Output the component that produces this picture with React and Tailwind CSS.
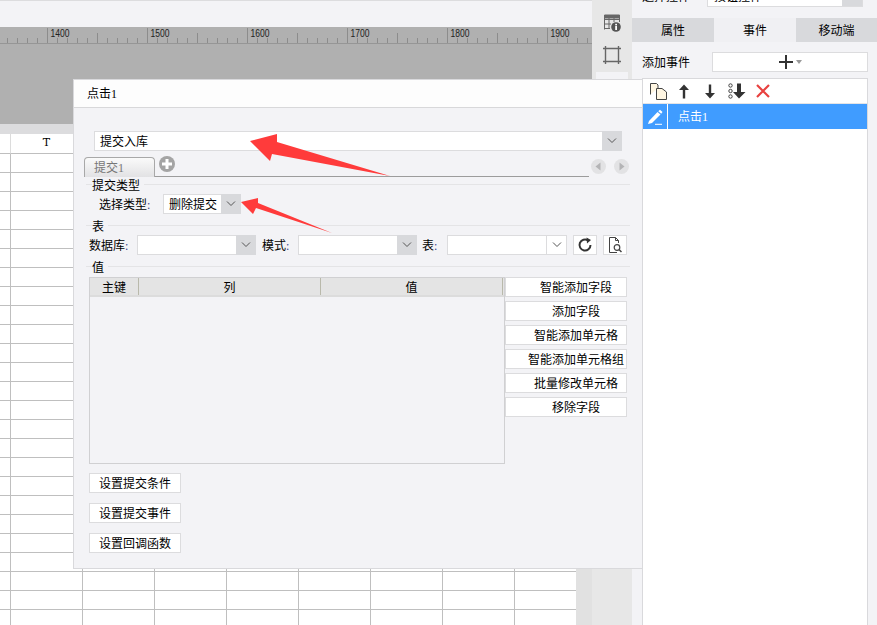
import React from "react";

const labels = [1400, 1500, 1600, 1700, 1800, 1900];
const sideButtons = ["智能添加字段", "添加字段", "智能添加单元格", "智能添加单元格组", "批量修改单元格", "移除字段"];
const bottomButtons = ["设置提交条件", "设置提交事件", "设置回调函数"];

const Chevron = () => (
  <svg width="10" height="6" viewBox="0 0 10 6" fill="none" stroke="#555" strokeWidth="1">
    <path d="M1 0.5 L5 4.5 L9 0.5" />
  </svg>
);

const Ruler = () => {
  const ticks = [];
  for (let x = 7; x < 592; x += 10) {
    const step = Math.round((x - 47) / 10);
    const top = step % 10 === 0 ? 1 : step % 5 === 0 ? 6 : 11;
    ticks.push(<line key={x} x1={x + 0.5} x2={x + 0.5} y1={top} y2="16" stroke="#8c8c8c" />);
  }
  return (
    <svg width="592" height="17" className="block">
      {ticks}
      <line x1="0" x2="592" y1="16.5" y2="16.5" stroke="#969696" />
      {labels.map((n, i) => (
        <text key={n} x={50.5 + i * 100} y="10" fontSize="10" fill="#222" fontFamily="Liberation Sans, sans-serif" textLength="19" lengthAdjust="spacingAndGlyphs">
          {n}
        </text>
      ))}
    </svg>
  );
};

const Sheet = () => {
  const cells = [];
  for (let r = 0; r < 26; r++) {
    for (let c = 0; c < 9; c++) {
      cells.push(
        <div
          key={`${r}-${c}`}
          className={`border-b border-r border-[#bfbfbf] flex items-center justify-center ${
            r === 0 ? "border-r-[#dcdcdc]" : ""
          }`}
        >
          {r === 0 && c === 1 ? "T" : ""}
        </div>
      );
    }
  }
  return (
    <div className="w-[576px] h-full overflow-hidden bg-white">
      <div className="grid grid-cols-[11px_repeat(8,72px)] grid-rows-[20px] auto-rows-[19px] w-[587px] font-['DejaVu_Serif',serif] text-[11px] text-black">
        {cells}
      </div>
    </div>
  );
};

const Combo = ({ width, text, plain }) => (
  <div className={`flex h-[20px] border border-[#dcdcde] bg-white ${width}`}>
    <div className="flex-1 pl-[5px] leading-[20px] whitespace-nowrap overflow-hidden">{text}</div>
    <div className={`w-[20px] -my-px -mr-px flex items-center justify-center ${plain ? "border-l border-[#dcdcde] my-0 mr-0" : "bg-[#d8d9dc]"}`}>
      <Chevron />
    </div>
  </div>
);

const SectionTitle = ({ title, className }) => (
  <div className={`flex items-center h-[14px] ml-[12px] w-[544px] ${className}`}>
    <div className="w-[6px] h-px bg-[#e4e4e6]" />
    <div className="pr-[4px] pt-[4px] leading-[14px] whitespace-nowrap">{title}</div>
    <div className="flex-1 h-px bg-[#e4e4e6]" />
  </div>
);

const Label = ({ text, width }) => (
  <div className={`h-[20px] whitespace-nowrap leading-[22px] ${width}`}>
    {text}
    <span className="text-[#33408a]">:</span>
  </div>
);

const IconButton = ({ children, className }) => (
  <div className={`w-[24px] h-[20px] border border-[#dcdcde] bg-white flex items-center justify-center ${className}`}>
    {children}
  </div>
);

const PlainButton = ({ children, className }) => (
  <div className={`h-[20px] border border-[#dcdcde] bg-white leading-[20px] text-center whitespace-nowrap ${className}`}>
    {children}
  </div>
);

const NavDot = ({ d, className }) => (
  <svg width="15" height="15" viewBox="0 0 15 15" className={className}>
    <circle cx="7.5" cy="7.5" r="7.5" fill="#e2e2e4" />
    <path d={d} fill="#b4b4b6" />
  </svg>
);

const Dialog = () => (
  <div className="absolute left-[73px] top-[79px] w-[570px] h-[490px] border border-[#d9d9dc] bg-[#f3f3f6] text-[12px] text-black">
    <div className="h-[28px] border-b border-[#d8d8da] bg-[#fdfdfd] pl-[13px] leading-[29px]">点击1</div>

    <div className="ml-[20px] mt-[23px]">
      <Combo width="w-[528px]" text="提交入库" />
    </div>

    <div className="flex ml-[10px] mt-[6px] h-[20px]">
      <div className="w-[71px] h-[20px] border border-b-0 border-[#a8a8a8] rounded-t-[4px] bg-gradient-to-b from-[#fafafa] to-[#e2e2e4] pl-[9px] leading-[20px] text-[#777]">
        提交1
      </div>
      <div className="w-[434px] border-b border-[#9c9c9c] pl-[4px]">
        <svg width="16" height="16" viewBox="0 0 16 16" className="-mt-px">
          <circle cx="8" cy="8" r="8" fill="#a4a4a4" />
          <path d="M3 6.5 H6.5 V3 H9.5 V6.5 H13 V9.5 H9.5 V13 H6.5 V9.5 H3 Z" fill="#fff" />
        </svg>
      </div>
      <div className="flex gap-[8px] pl-[2px] pt-[2px]">
        <NavDot d="M9.5 3.5 V11.5 L4.5 7.5 Z" />
        <NavDot d="M5.5 3.5 V11.5 L10.5 7.5 Z" />
      </div>
    </div>

    <SectionTitle title="提交类型" />
    <div className="flex ml-[25px] mt-[3px]">
      <Label text="选择类型" width="w-[64px]" />
      <Combo width="w-[78px]" text="删除提交" />
    </div>

    <SectionTitle title="表" className="mt-[4px]" />
    <div className="flex ml-[15px] mt-[3px]">
      <Label text="数据库" width="w-[48px]" />
      <Combo width="w-[119px]" />
      <Label text="模式" width="w-[36px] ml-[6px]" />
      <Combo width="w-[119px]" />
      <Label text="表" width="w-[25px] ml-[5px]" />
      <Combo width="w-[120px]" plain />
      <IconButton className="ml-[6px]">
        <svg width="16" height="16" viewBox="0 0 16 16" fill="none">
          <path d="M13.5 8 A5.5 5.5 0 1 1 11 3.4" stroke="#333" strokeWidth="2" />
          <path d="M9.5 0.5 L14 3 L10 6.5 Z" fill="#333" />
        </svg>
      </IconButton>
      <IconButton className="ml-[6px]">
        <svg width="16" height="16" viewBox="0 0 16 16" fill="none" stroke="#444">
          <path d="M10 15.5 H2.5 V0.5 H8.5 L11.5 3.5 V6" />
          <path d="M8.5 0.5 V3.5 H11.5" />
          <circle cx="10" cy="10.5" r="2.8" strokeWidth="1.2" />
          <path d="M12 12.5 L14.5 15" strokeWidth="1.5" />
        </svg>
      </IconButton>
    </div>

    <SectionTitle title="值" className="mt-[4px]" />
    <div className="flex ml-[15px] mt-[4px]">
      <div className="w-[416px] h-[187px] border border-[#d0d0d2] flex flex-col">
        <div className="flex h-[19px] bg-[#e4e4e4] border-b-2 border-[#dcdcdc] leading-[20px] text-center">
          <div className="w-[49px] border-r border-[#b9b9ab]">主键</div>
          <div className="w-[182px] border-r border-[#b9b9ab]">列</div>
          <div className="w-[182px] border-r border-[#b9b9ab]">值</div>
        </div>
      </div>
      <div className="flex flex-col gap-[4px]">
        {sideButtons.map((name) => (
          <PlainButton key={name} className="w-[122px] pl-[20px]">
            {name}
          </PlainButton>
        ))}
      </div>
    </div>

    <div className="flex flex-col gap-[10px] ml-[15px] mt-[9px]">
      {bottomButtons.map((name) => (
        <PlainButton key={name} className="w-[92px]">
          {name}
        </PlainButton>
      ))}
    </div>
  </div>
);

const ToolStrip = () => (
  <div className="w-[40px] h-full bg-[#e7e7e7] flex flex-col items-center">
    <svg width="18" height="18" viewBox="0 0 18 18" className="mt-[14px]" fill="none" stroke="#666">
      <path d="M1.5 15.5 V1.5 H16.5 V8" />
      <path d="M1.5 5.5 H16.5 M1.5 10 H8 M1.5 14.5 H7 M6 1.5 V15 M11 1.5 V8" />
      <path d="M1.5 1 H16.5 V4 H1.5 Z" fill="#666" />
      <circle cx="13" cy="13" r="4.8" fill="#555" stroke="none" />
      <rect x="12.2" y="9.8" width="1.8" height="1.6" fill="#fff" stroke="none" />
      <rect x="12.2" y="12" width="1.8" height="4" fill="#fff" stroke="none" />
    </svg>
    <svg width="18" height="18" viewBox="0 0 18 18" className="mt-[14px]" fill="none">
      <path d="M2.5 0 V18 M15.5 0 V18 M0 2.5 H18 M0 15.5 H18" stroke="#666" strokeWidth="1.4" />
    </svg>
    <div className="w-[32px] h-[10px] mt-[8px] bg-[#f3f3f6]" />
  </div>
);

const EventToolbar = () => (
  <div className="h-[25px] flex items-center border-b border-[#e4e4e6] pl-[7px]">
    <svg width="17" height="17" viewBox="0 0 17 17" fill="none" stroke="#444">
      <path d="M0.5 11.5 V0.5 H6.5 L8 2 V5" fill="#fff6e2" />
      <path d="M6.5 5.5 H12 L16.5 9 V16.5 H6.5 Z" fill="#fff6e2" />
    </svg>
    <svg width="14" height="15" viewBox="0 0 14 15" className="ml-[10px]" fill="#333">
      <path d="M7 0.5 L12 6 H8.2 V14.5 H5.8 V6 H2 Z" />
    </svg>
    <svg width="14" height="15" viewBox="0 0 14 15" className="ml-[12px]" fill="#333">
      <path d="M5.8 0.5 H8.2 V9 H12 L7 14.5 L2 9 H5.8 Z" />
    </svg>
    <svg width="18" height="16" viewBox="0 0 18 16" className="ml-[11px]">
      <circle cx="2.5" cy="2.5" r="1.7" fill="none" stroke="#444" />
      <circle cx="2.5" cy="8" r="1.7" fill="none" stroke="#444" />
      <circle cx="2.5" cy="13.5" r="1.7" fill="none" stroke="#444" />
      <path d="M9 0.5 H13 V9 H17.5 L11 15.5 L5 9 H9 Z" fill="#333" />
    </svg>
    <svg width="14" height="14" viewBox="0 0 14 14" className="ml-[10px]" fill="none" stroke="#e8413f" strokeWidth="2.2">
      <path d="M1 1 L13 13 M13 1 L1 13" />
    </svg>
  </div>
);

const RightPanel = () => (
  <div className="flex-1 h-full bg-[#f3f3f6] overflow-hidden text-[12px] text-black">
    <div className="flex -mt-[13px] h-[20px] pl-[10px]">
      <div className="w-[65px] leading-[20px]">选择控件</div>
      <div className="w-[156px] flex border border-[#dcdcde] bg-white">
        <div className="flex-1 pl-[6px] leading-[18px]">按钮控件</div>
        <div className="w-[20px] bg-[#d8d9dc]" />
      </div>
    </div>
    <div className="flex mt-[11px] h-[24px] leading-[27px] text-center">
      <div className="w-[82px] bg-[#d8d9dc]">属性</div>
      <div className="w-[82px] bg-[#f0f0f3]">事件</div>
      <div className="flex-1 bg-[#d8d9dc]">移动端</div>
    </div>
    <div className="flex mt-[10px] pl-[10px]">
      <div className="w-[70px] leading-[22px] h-[20px]">添加事件</div>
      <div className="w-[156px] h-[20px] border border-[#dcdcde] bg-white flex items-center justify-center">
        <svg width="14" height="14" viewBox="0 0 14 14" fill="#333">
          <path d="M6 0 H8 V6 H14 V8 H8 V14 H6 V8 H0 V6 H6 Z" />
        </svg>
        <svg width="6" height="4" viewBox="0 0 6 4" className="ml-[3px]" fill="#999">
          <path d="M0 0 H6 L3 4 Z" />
        </svg>
      </div>
    </div>
    <div className="ml-[10px] mt-[6px] w-[226px] h-[560px] border border-[#d9d9dc] bg-white">
      <EventToolbar />
      <div className="flex h-[25px] bg-[#409cff] text-white leading-[27px]">
        <div className="w-[25px] border-r border-white flex items-center justify-center">
          <svg width="16" height="16" viewBox="0 0 16 16" fill="#fff">
            <path d="M2 12 L10.5 3 L13.5 5.5 L5 14 L1 15 Z" />
            <path d="M11.3 2.2 L13 0.8 L15.5 3 L14.2 4.7 Z" />
            <rect x="8" y="14.8" width="7" height="1" />
          </svg>
        </div>
        <div className="pl-[10px]">点击1</div>
      </div>
    </div>
  </div>
);

const Arrows = () => (
  <>
    <svg width="150" height="50" viewBox="0 0 150 50" className="absolute left-[245px] top-[130px]">
      <path d="M5 11 L32 4 L32 12 L145 46 L27 24 L25 31 Z" fill="#ff3b3b" />
    </svg>
    <svg width="100" height="45" viewBox="0 0 100 45" className="absolute left-[238px] top-[193px]">
      <path d="M3 9 L20 5 L20 10 L94 40 L18 15 L15 21 Z" fill="#ff3b3b" />
    </svg>
  </>
);

export default function App() {
  return (
    <div className="relative w-[877px] h-[625px] overflow-hidden flex bg-white font-['Liberation_Serif','Noto_Sans_CJK_SC',serif]">
      <div className="w-[592px] h-full flex flex-col">
        <div className="h-[27px] bg-[#f3f3f6] border-t border-[#dcdcde]" />
        <div className="h-[97px] bg-[#b0b0b0]">
          <Ruler />
        </div>
        <div className="h-[10px] bg-[#dcdcde]" />
        <div className="flex-1 flex min-h-0">
          <Sheet />
          <div className="w-[16px] bg-[#e1e1e1]" />
        </div>
      </div>
      <ToolStrip />
      <RightPanel />
      <Dialog />
      <Arrows />
    </div>
  );
}
